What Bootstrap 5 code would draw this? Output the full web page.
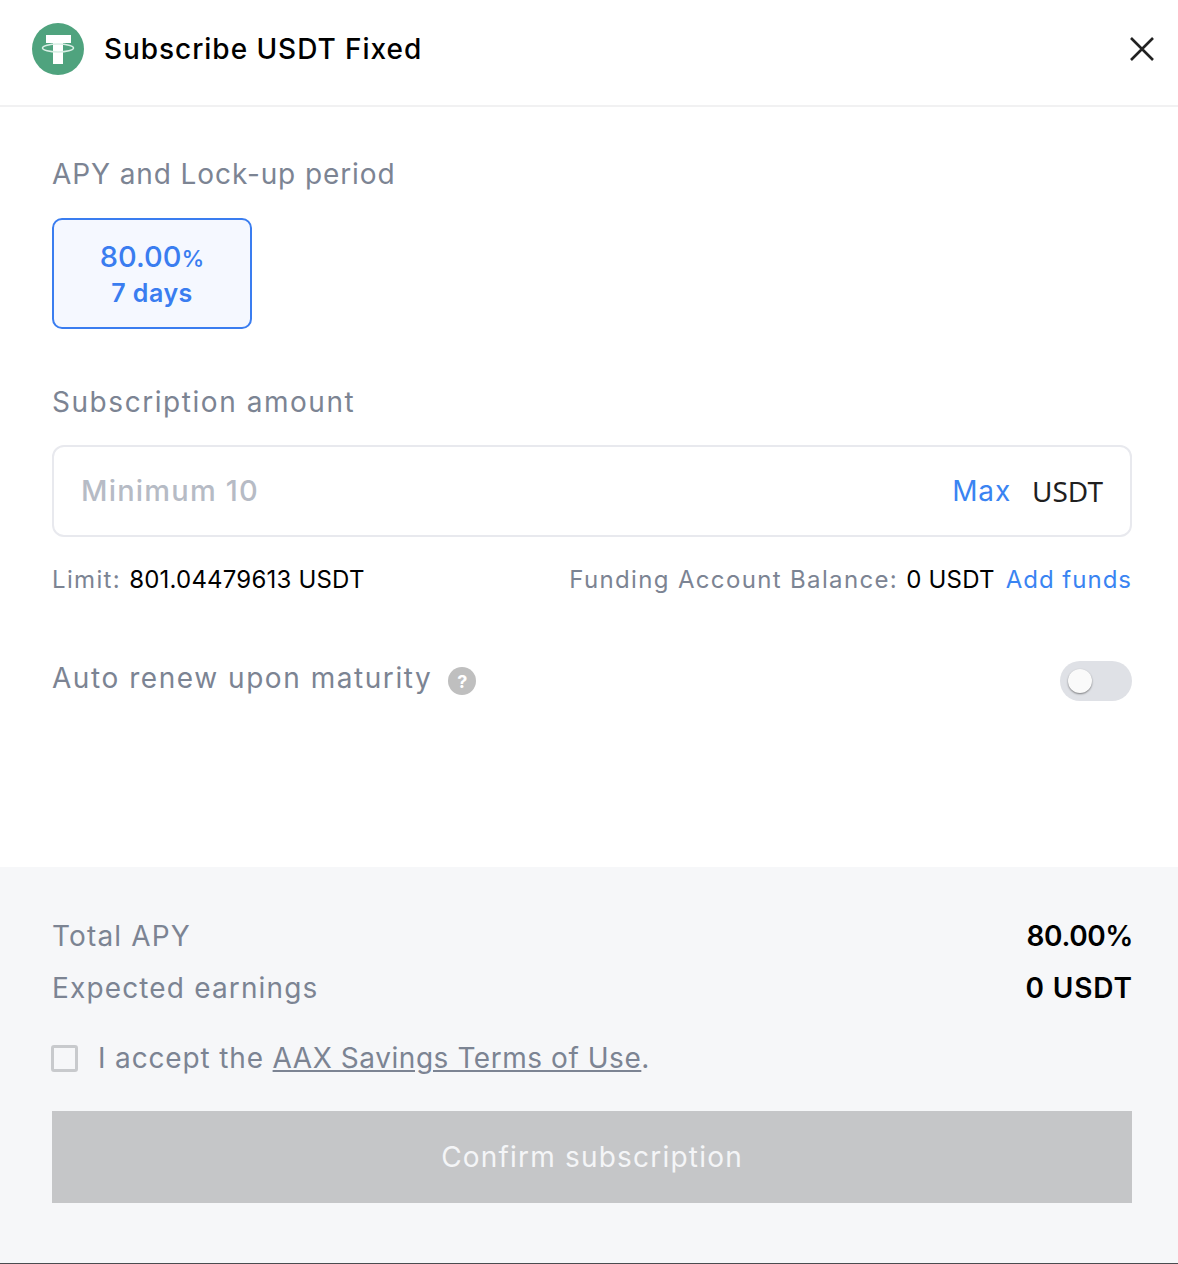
<!DOCTYPE html>
<html lang="en">
<head>
  <meta charset="UTF-8" />
  <title>Subscribe USDT Fixed</title>
  <link href="https://cdn.jsdelivr.net/npm/bootstrap@5.3.0/dist/css/bootstrap.min.css" rel="stylesheet" />
<style>
  html, body { height: 100%; }
  body {
    font-family: Inter, "Liberation Sans", sans-serif;
    color: #000;
    background: #fff;
    overflow: hidden;
  }
  .sheet { height: 1264px; border-bottom: 1px solid #4a4c50; }
  .sheet-head {
    height: 107px;
    padding: 0 23px 7px 32px;
    border-bottom: 2px solid #f1f1f2;
  }
  .sheet-title { font-size: 28px; font-weight: 550; letter-spacing: .95px; margin-left: 20px; line-height: 1; }
  .sheet-main { height: 760px; padding: 50px 46px 0 52px; }
  .field-label { font-size: 28px; line-height: 34px; color: #7c8493; letter-spacing: 1.55px; }
  .label-tight { letter-spacing: .9px; }
  .label-gap { margin-top: 56px; }
  .term-box {
    width: 200px; height: 111px; margin-top: 27px; padding-top: 3px;
    border: 2px solid #3a7df0; border-radius: 10px;
    background: #f5f8ff; color: #3a7df0;
  }
  .term-rate { font-size: 29px; font-weight: 500; line-height: 34px; }
  .term-rate span { font-size: 23px; }
  .term-days { font-size: 25px; font-weight: 600; line-height: 35px; letter-spacing: .5px; }
  .amount-box {
    height: 92px; margin-top: 26px; padding: 0 27px 0 27px;
    border: 2px solid #e8e9ee; border-radius: 12px;
  }
  .amount-hint { font-size: 29px; color: #b6bbc5; font-weight: 500; letter-spacing: 1.2px; }
  .amount-max { font-size: 28px; color: #3a84f2; letter-spacing: .8px; }
  .amount-unit { font-family: "Noto Sans", sans-serif; font-size: 28px; color: #1f1f1f; margin-left: 21px; }
  .info-line { font-size: 24px; line-height: 30px; margin-top: 28px; color: #7c8493; letter-spacing: 1.35px; }
  .info-line b { font-weight: 400; color: #000; letter-spacing: .2px; }
  .info-line a { color: #3a84f2; text-decoration: none; margin-left: 11px; letter-spacing: 1px; }
  .renew-line { margin-top: 66px; }
  .renew-line .field-label { margin-top: -6px; }
  .help-dot {
    width: 28px; height: 28px; border-radius: 50%; margin-left: 16px;
    background: #bfbfbf; color: #fff; font-size: 18px; font-weight: 700;
  }
  .toggle-off {
    width: 72px; height: 40px; border-radius: 20px; background: #dfe1e6; padding-left: 8px;
  }
  .toggle-off i {
    display: block; width: 24px; height: 24px; border-radius: 50%;
    background: #fafafa; box-shadow: 0 1px 2px rgba(0,0,0,.45);
  }
  .sheet-foot { height: 396px; background: #f6f7f9; padding: 43px 46px 0 52px; }
  .sum-line { height: 52px; letter-spacing: 1.15px; }
  .sum-line strong { font-size: 28px; font-weight: 600; color: #000; margin-right: -1px; letter-spacing: .9px; }
  .sum-line strong.rate-val { letter-spacing: -.4px; }
  .accept-line { font-size: 28px; color: #7c8493; margin-top: 26px; height: 36px; letter-spacing: .85px; }
  .accept-line a { color: #7c8493; letter-spacing: .55px; }
  .tick-box {
    width: 27px; height: 27px; margin: 0 20px 0 -1px;
    border: 3px solid #c8cacd; border-radius: 3px;
  }
  .confirm-btn, .confirm-btn:disabled {
    height: 92px; margin-top: 35px; width: 100%; opacity: 1;
    background: #c5c6c8; color: #f4f5f7; border: 0; border-radius: 0;
    font-size: 28px; letter-spacing: 1.2px;
  }
</style>
</head>
<body>
  <div class="sheet d-flex flex-column">
    <div class="sheet-head d-flex align-items-center">
      <svg width="52" height="52" viewBox="0 0 52 52">
        <circle cx="26" cy="26" r="26" fill="#4fa37e"/>
        <path d="M14 12h25v8H31v21H21V20h-7z" fill="#fff"/>
        <ellipse cx="26" cy="25" rx="15.5" ry="4" fill="none" stroke="#d8eee4" stroke-width="1.5"/>
      </svg>
      <div class="sheet-title">Subscribe USDT Fixed</div>
      <svg class="ms-auto" width="26" height="26" viewBox="0 0 26 26">
        <path d="M2 2l22 22M24 2L2 24" stroke="#222" stroke-width="2.6" fill="none"/>
      </svg>
    </div>

    <div class="sheet-main">
      <div class="field-label label-tight">APY and Lock-up period</div>
      <div class="term-box d-flex flex-column align-items-center justify-content-center">
        <div class="term-rate">80.00<span>%</span></div>
        <div class="term-days">7 days</div>
      </div>

      <div class="field-label label-gap">Subscription amount</div>
      <div class="amount-box d-flex align-items-center">
        <span class="amount-hint">Minimum 10</span>
        <span class="amount-max ms-auto">Max</span>
        <span class="amount-unit">USDT</span>
      </div>

      <div class="info-line d-flex justify-content-between">
        <div>Limit: <b>801.04479613 USDT</b></div>
        <div>Funding Account Balance: <b>0 USDT</b><a href="#">Add funds</a></div>
      </div>

      <div class="renew-line d-flex align-items-center">
        <span class="field-label">Auto renew upon maturity</span>
        <span class="help-dot d-flex align-items-center justify-content-center">?</span>
        <span class="toggle-off ms-auto d-flex align-items-center"><i></i></span>
      </div>
    </div>

    <div class="sheet-foot">
      <div class="sum-line d-flex align-items-center justify-content-between field-label">
        <span>Total APY</span><strong class="rate-val">80.00%</strong>
      </div>
      <div class="sum-line d-flex align-items-center justify-content-between field-label">
        <span>Expected earnings</span><strong>0 USDT</strong>
      </div>
      <div class="accept-line d-flex align-items-center">
        <span class="tick-box"></span>
        <span>I accept the <a href="#">AAX Savings Terms of Use</a>.</span>
      </div>
      <button class="btn confirm-btn" type="button" disabled>Confirm subscription</button>
    </div>
  </div>
  <script src="https://cdn.jsdelivr.net/npm/bootstrap@5.3.0/dist/js/bootstrap.bundle.min.js"></script>
</body>
</html>
